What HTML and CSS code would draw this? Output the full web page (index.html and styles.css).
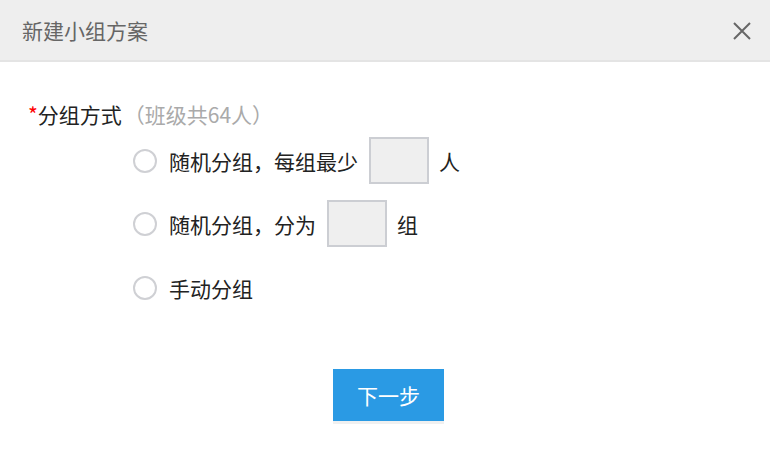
FILE: index.html
```html
<!DOCTYPE html>
<html lang="zh-CN">
<head>
    <meta charset="UTF-8">
    <title>新建小组方案</title>
    <link rel="stylesheet" href="styles.css">
</head>
<body>
    <div class="header">
        <span class="title">新建小组方案</span>
        <span class="close">
            <svg width="18" height="18" viewBox="0 0 18 18">
                <path d="M1 1 L17 17 M17 1 L1 17" stroke="#666" stroke-width="2" fill="none"/>
            </svg>
        </span>
    </div>

    <div class="main">
        <div class="label">
            <span class="required">*</span>分组方式<span class="hint">（班级共64人）</span>
        </div>

        <div class="options">
            <div class="option">
                <span class="radio"></span>
                <span>随机分组，每组最少</span>
                <input class="num" type="text">
                <span>人</span>
            </div>
            <div class="option">
                <span class="radio"></span>
                <span>随机分组，分为</span>
                <input class="num" type="text">
                <span>组</span>
            </div>
            <div class="option">
                <span class="radio"></span>
                <span>手动分组</span>
            </div>
        </div>

        <div class="actions">
            <button class="next">下一步</button>
        </div>
    </div>
</body>
</html>
```

FILE: styles.css
```css
body, html {
    margin: 0;
    height: 100%;
    background: #fff;
    font-family: "Noto Sans CJK SC", "Noto Sans", sans-serif;
    font-size: 21px;
    color: #222;
}
.header {
    height: 60px;
    display: flex;
    align-items: center;
    justify-content: space-between;
    padding: 0 19px 0 22px;
    background: #eeeeee;
    border-bottom: 2px solid #e4e4e4;
}
.title {
    color: #666;
    font-size: 21px;
    line-height: 30px;
}
.close {
    display: flex;
    padding-top: 1px;
}
.main {
    padding: 37px 0 0 28px;
}
.label {
    line-height: 30px;
}
.required {
    color: #f00;
}
.hint {
    color: #aaa;
    margin-left: 2px;
}
.options {
    display: flex;
    flex-direction: column;
    gap: 16px;
    padding: 8px 0 0 105px;
}
.option {
    display: flex;
    align-items: center;
    height: 47px;
}
.option:last-child {
    margin-top: 1px;
}
.radio {
    width: 20px;
    height: 20px;
    border: 2px solid #cfd0d4;
    border-radius: 50%;
    margin-right: 12px;
}
.num {
    width: 56px;
    height: 43px;
    padding: 0;
    margin: 0 10px 0 11px;
    border: 2px solid #ccced3;
    background: #efefef;
    outline: none;
}
.actions {
    padding: 58px 0 0 305px;
}
.next {
    width: 111px;
    height: 52px;
    border: none;
    background: #2a9ae4;
    color: #fff;
    font-family: inherit;
    font-size: 21px;
    box-shadow: 0 3px 0 #f0f0f0;
    cursor: pointer;
}
```
